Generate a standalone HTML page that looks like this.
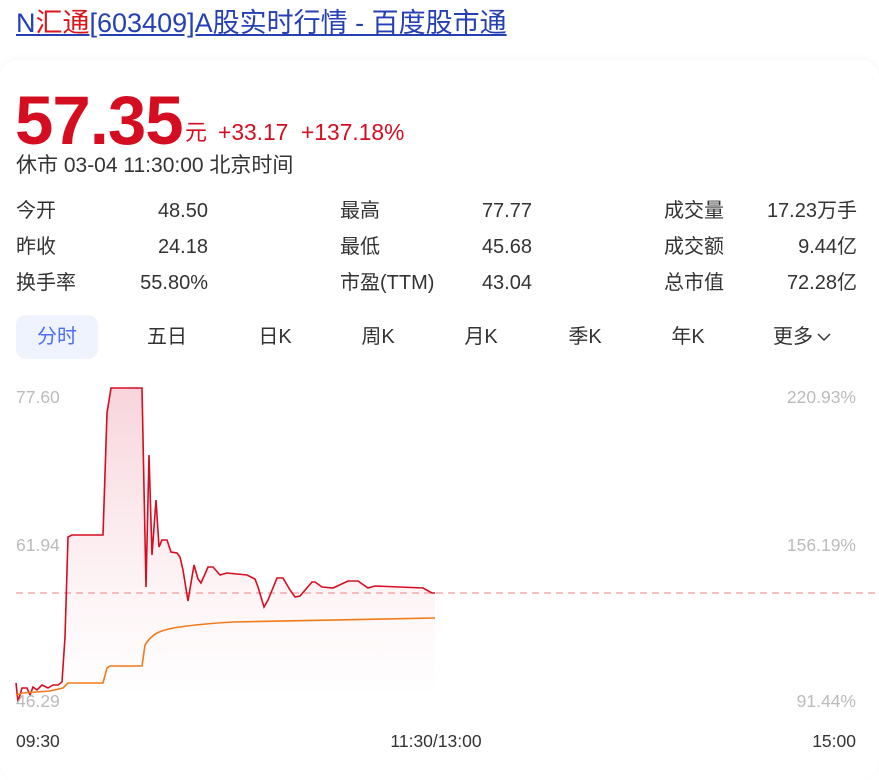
<!DOCTYPE html><html><head><meta charset="utf-8"><style>
body{margin:0;width:879px;height:765px;background:#fff;font-family:"Liberation Sans","Noto Sans CJK SC",sans-serif;position:relative;overflow:hidden}
.a{position:absolute;white-space:nowrap}
.t{left:16px;top:5px;font-size:27px;line-height:36px;color:#2440b3;text-decoration:underline}
.r{color:#d9161c}
.card{position:absolute;left:0;top:60px;width:879px;height:720px;border-radius:18px;box-shadow:0 -2px 8px rgba(0,0,0,.04)}
.p{left:15px;top:81px;font-size:69px;line-height:80px;font-weight:bold;color:#d50d20;letter-spacing:-1px}
.red{color:#d50d20}
.l{font-size:20px;line-height:24px;color:#333}
.v{text-align:right;width:150px}
.tab{font-size:20px;color:#333;top:315px;width:82px;text-align:center;line-height:44px}
</style></head><body>
<div class="a t">N<span class="r">汇通</span>[603409]A股实时行情 - 百度股市通</div>
<div class="card"></div>
<div class="a p">57.35</div>
<div class="a red" style="left:185px;top:119px;font-size:22px;line-height:28px">元</div>
<div class="a red" style="left:218px;top:118px;font-size:22.8px;line-height:28px">+33.17&nbsp; +137.18%</div>
<div class="a l" style="left:16px;top:154px;font-size:21px">休市 03-04 11:30:00 北京时间</div>

<div class="a l" style="left:16px;top:199px">今开</div><div class="a l v red" style="left:58px;top:199px">48.50</div>
<div class="a l" style="left:16px;top:235px">昨收</div><div class="a l v" style="left:58px;top:235px">24.18</div>
<div class="a l" style="left:16px;top:271px">换手率</div><div class="a l v" style="left:58px;top:271px">55.80%</div>
<div class="a l" style="left:340px;top:199px">最高</div><div class="a l v red" style="left:382px;top:199px">77.77</div>
<div class="a l" style="left:340px;top:235px">最低</div><div class="a l v red" style="left:382px;top:235px">45.68</div>
<div class="a l" style="left:340px;top:271px">市盈(TTM)</div><div class="a l v" style="left:382px;top:271px">43.04</div>
<div class="a l" style="left:664px;top:199px">成交量</div><div class="a l" style="right:22px;top:199px">17.23万手</div>
<div class="a l" style="left:664px;top:235px">成交额</div><div class="a l" style="right:22px;top:235px">9.44亿</div>
<div class="a l" style="left:664px;top:271px">总市值</div><div class="a l" style="right:22px;top:271px">72.28亿</div>

<div class="a tab" style="left:16px;background:#eef3fe;color:#4e6ef2;border-radius:10px">分时</div>
<div class="a tab" style="left:126px">五日</div>
<div class="a tab" style="left:234px">日K</div>
<div class="a tab" style="left:337px">周K</div>
<div class="a tab" style="left:440px">月K</div>
<div class="a tab" style="left:544px">季K</div>
<div class="a tab" style="left:647px">年K</div>
<div class="a tab" style="left:752px">更多</div>

<svg class="a" style="left:0;top:0" width="879" height="765">
<path d="M818,334 L824,340 L830,334" fill="none" stroke="#333" stroke-width="1.5"/>
<defs><linearGradient id="gr" x1="0" y1="0" x2="0" y2="1"><stop offset="0" stop-color="#f5c6cf"/><stop offset="1" stop-color="#fff" stop-opacity=".6"/></linearGradient></defs>
<path d="M16,683 L18,702 L22,688 L27,688 L30,695 L33,687 L37,690 L42,685 L48,688 L53,685 L58,685 L62,682 L65,637 L68,537 L72,535 L103,535 L107,413 L111,388 L142,388 L146,587 L149,455 L152,555 L156,500 L159,547 L162,540 L167,540 L171,552 L177,553 L180,557 L183,570 L188,601 L194,565 L198,579 L201,583 L208,567 L213,567 L220,575 L227,573 L247,575 L255,579 L258,587 L264,607 L268,600 L277,578 L283,578 L290,590 L295,597 L300,596 L312,582 L315,582 L322,587 L333,588 L348,581 L358,581 L368,588 L375,586 L400,587 L423,588 L432,593 L435,593 L435,692 L16,692Z" fill="url(#gr)" opacity=".75"/>
<line x1="16" y1="593" x2="879" y2="593" stroke="#f09a9a" stroke-width="1.3" stroke-dasharray="7,5"/>
<path d="M16,683 L18,702 L22,688 L27,688 L30,695 L33,687 L37,690 L42,685 L48,688 L53,685 L58,685 L62,682 L65,637 L68,537 L72,535 L103,535 L107,413 L111,388 L142,388 L146,587 L149,455 L152,555 L156,500 L159,547 L162,540 L167,540 L171,552 L177,553 L180,557 L183,570 L188,601 L194,565 L198,579 L201,583 L208,567 L213,567 L220,575 L227,573 L247,575 L255,579 L258,587 L264,607 L268,600 L277,578 L283,578 L290,590 L295,597 L300,596 L312,582 L315,582 L322,587 L333,588 L348,581 L358,581 L368,588 L375,586 L400,587 L423,588 L432,593 L435,593" fill="none" stroke="#d50d20" stroke-width="1.6"/>
<path d="M16,695 L23,693 L50,691 L63,688 L68,683 L103,683 L107,668 L110,666 L142,666 L145,645 Q150,637 157,633 Q165,629 180,627 Q200,624 233,622 L435,618" fill="none" stroke="#f07a1a" stroke-width="1.6"/>
<g font-size="17.5" fill="#bbb" font-family="Liberation Sans">
<text x="16" y="403">77.60</text>
<text x="16" y="551">61.94</text>
<text x="16" y="707">46.29</text>
<text x="856" y="403" text-anchor="end">220.93%</text>
<text x="856" y="551" text-anchor="end">156.19%</text>
<text x="856" y="707" text-anchor="end">91.44%</text>
</g>
<g font-size="17.5" fill="#333" font-family="Liberation Sans">
<text x="16" y="747">09:30</text>
<text x="436" y="747" text-anchor="middle">11:30/13:00</text>
<text x="856" y="747" text-anchor="end">15:00</text>
</g>
</svg>
</body></html>
